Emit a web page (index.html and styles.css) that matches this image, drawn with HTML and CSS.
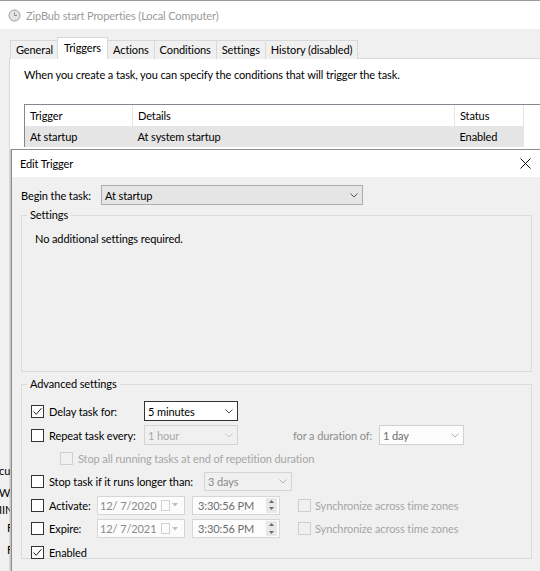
FILE: index.html
```html
<!DOCTYPE html>
<html lang="en">
<head>
    <meta charset="UTF-8">
    <title>ZipBub start Properties</title>
    <link rel="stylesheet" href="styles.css">
</head>
<body>

<div id="props" class="window">
    <div class="titlebar">
        <svg class="app-icon" width="13" height="13" viewBox="0 0 13 13">
            <circle cx="6.5" cy="6.5" r="5.5" fill="#e4e4e4" stroke="#9a9a9a"/>
            <path d="M6.5 3.5 V6.5 H9" fill="none" stroke="#8a8a8a"/>
        </svg>
        <span class="title">ZipBub start Properties (Local Computer)</span>
    </div>
    <div class="tabs">
        <div class="tab">General</div>
        <div class="tab active">Triggers</div>
        <div class="tab">Actions</div>
        <div class="tab">Conditions</div>
        <div class="tab">Settings</div>
        <div class="tab">History (disabled)</div>
    </div>
    <div class="tab-panel">
        <p class="intro">When you create a task, you can specify the conditions that will trigger the task.</p>
        <div class="listview">
            <table>
                <thead>
                    <tr><th class="c1">Trigger</th><th class="c2">Details</th><th class="c3">Status</th></tr>
                </thead>
                <tbody>
                    <tr class="sel"><td>At startup</td><td>At system startup</td><td>Enabled</td></tr>
                </tbody>
            </table>
        </div>
    </div>
</div>

<div class="peek">
    <div class="p1">cu</div>
    <div class="p2">Whe</div>
    <div class="p3">IIN</div>
    <div class="p4">F</div>
    <div class="p5">F</div>
</div>

<div id="editTrigger" class="dialog">
    <div class="dlg-title">
        <span>Edit Trigger</span>
        <svg class="close" width="11" height="11" viewBox="0 0 11 11">
            <path d="M0.5 0.5 L10.5 10.5 M10.5 0.5 L0.5 10.5" stroke="#111" stroke-width="1"/>
        </svg>
    </div>
    <div class="dlg-body">
        <div class="begin-row">
            <span class="begin-label">Begin the task:</span>
            <div class="combo combo-main">
                <span>At startup</span>
                <svg class="chev" width="8" height="5" viewBox="0 0 8 5"><path d="M0.5 0.5 L4 4 L7.5 0.5" fill="none" stroke="#555"/></svg>
            </div>
        </div>

        <fieldset class="group">
            <legend>Settings</legend>
            <div class="settings-body">No additional settings required.</div>
        </fieldset>

        <fieldset class="group advanced">
            <legend>Advanced settings</legend>
            <div class="adv-rows">
                <div class="row h24">
                    <span class="check on"><svg width="11" height="11" viewBox="0 0 11 11"><path d="M1.5 5.5 L4.2 8.3 L9.5 2.2" fill="none" stroke="#222"/></svg></span>
                    <span class="lbl w95">Delay task for:</span>
                    <div class="combo combo-focus w94">
                        <span>5 minutes</span>
                        <svg class="chev" width="8" height="5" viewBox="0 0 8 5"><path d="M0.5 0.5 L4 4 L7.5 0.5" fill="none" stroke="#555"/></svg>
                    </div>
                </div>
                <div class="row h24">
                    <span class="check"></span>
                    <span class="lbl w95">Repeat task every:</span>
                    <div class="combo combo-off w94">
                        <span>1 hour</span>
                        <svg class="chev" width="8" height="5" viewBox="0 0 8 5"><path d="M0.5 0.5 L4 4 L7.5 0.5" fill="none" stroke="#c4c4c4"/></svg>
                    </div>
                    <span class="lbl muted duration">for a duration of:</span>
                    <div class="combo combo-light w85">
                        <span>1 day</span>
                        <svg class="chev" width="8" height="5" viewBox="0 0 8 5"><path d="M0.5 0.5 L4 4 L7.5 0.5" fill="none" stroke="#b0b0b0"/></svg>
                    </div>
                </div>
                <div class="row h23 indent">
                    <span class="check off"></span>
                    <span class="lbl faint">Stop all running tasks at end of repetition duration</span>
                </div>
                <div class="row h23">
                    <span class="check"></span>
                    <span class="lbl w155">Stop task if it runs longer than:</span>
                    <div class="combo combo-off w88 short">
                        <span class="grey">3 days</span>
                        <svg class="chev" width="8" height="5" viewBox="0 0 8 5"><path d="M0.5 0.5 L4 4 L7.5 0.5" fill="none" stroke="#b0b0b0"/></svg>
                    </div>
                </div>
                <div class="row h24">
                    <span class="check"></span>
                    <span class="lbl w48">Activate:</span>
                    <div class="field date">
                        <span>12/&nbsp;7/2020</span>
                        <span class="cal-box"></span>
                        <svg class="tri" width="6" height="4" viewBox="0 0 6 4"><path d="M0 0 H6 L3 3.5 Z" fill="#c0c0c0"/></svg>
                    </div>
                    <div class="field time">
                        <span>3:30:56 PM</span>
                        <span class="spin">
                            <svg width="5" height="3" viewBox="0 0 5 3"><path d="M0 3 H5 L2.5 0 Z" fill="#6a6a6a"/></svg>
                            <svg width="5" height="3" viewBox="0 0 5 3"><path d="M0 0 H5 L2.5 3 Z" fill="#6a6a6a"/></svg>
                        </span>
                    </div>
                    <span class="check off sync"></span>
                    <span class="lbl faint">Synchronize across time zones</span>
                </div>
                <div class="row h23">
                    <span class="check"></span>
                    <span class="lbl w48">Expire:</span>
                    <div class="field date">
                        <span>12/&nbsp;7/2021</span>
                        <span class="cal-box"></span>
                        <svg class="tri" width="6" height="4" viewBox="0 0 6 4"><path d="M0 0 H6 L3 3.5 Z" fill="#c0c0c0"/></svg>
                    </div>
                    <div class="field time">
                        <span>3:30:56 PM</span>
                        <span class="spin">
                            <svg width="5" height="3" viewBox="0 0 5 3"><path d="M0 3 H5 L2.5 0 Z" fill="#6a6a6a"/></svg>
                            <svg width="5" height="3" viewBox="0 0 5 3"><path d="M0 0 H5 L2.5 3 Z" fill="#6a6a6a"/></svg>
                        </span>
                    </div>
                    <span class="check off sync"></span>
                    <span class="lbl faint">Synchronize across time zones</span>
                </div>
                <div class="row h24">
                    <span class="check on"><svg width="11" height="11" viewBox="0 0 11 11"><path d="M1.5 5.5 L4.2 8.3 L9.5 2.2" fill="none" stroke="#222"/></svg></span>
                    <span class="lbl">Enabled</span>
                </div>
            </div>
        </fieldset>
    </div>
</div>

</body>
</html>
```

FILE: styles.css
```css
body {
    margin: 0;
    width: 540px;
    height: 571px;
    overflow: hidden;
    position: relative;
    background: #f0f0f0;
    font-family: Lato, "Noto Sans", Arial, sans-serif;
    font-size: 11px;
    letter-spacing: -0.1px;
    color: #000;
}

/* background properties window */
.window {
    height: 571px;
    background: #f0f0f0;
    display: flex;
    flex-direction: column;
}
.titlebar {
    height: 28px;
    flex: none;
    background: #fff;
    border-top: 1px solid #9d9d9d;
    display: flex;
    align-items: center;
    padding-left: 8px;
}
.app-icon { margin-right: 5px; }
.title { color: #9a9a9a; }

.tabs {
    display: flex;
    align-items: flex-end;
    margin-top: 7px;
    padding-left: 10px;
    height: 22px;
    flex: none;
}
.tab {
    height: 18px;
    line-height: 18px;
    padding: 0 5px;
    border: 1px solid #d9d9d9;
    border-bottom: none;
    margin-right: -1px;
    background: #f0f0f0;
    position: relative;
    top: 1px;
    white-space: nowrap;
}
.tab.active {
    height: 21px;
    line-height: 20px;
    background: #fff;
    z-index: 2;
    margin: 0 -1px 0 -1px;
    padding: 0 6px;
}

.tab-panel {
    flex: 1;
    margin-left: 9px;
    background: #fff;
    border: 1px solid #d9d9d9;
    border-right: none;
    padding: 7px 0 0 14px;
}
.intro { margin: 0; line-height: 18px; white-space: nowrap; }

.listview {
    margin-top: 20px;
    border-top: 1px solid #828790;
    border-left: 1px solid #828790;
}
.listview table { border-collapse: collapse; width: 499px; }
.listview th, .listview td {
    text-align: left;
    font-weight: normal;
    height: 21px;
    padding: 0 0 0 5px;
    white-space: nowrap;
}
.listview th { border-right: 1px solid #e5e5e5; }
.listview .c1 { width: 102px; }
.listview .c2 { width: 316px; }
.listview tr.sel td { background: #e5e5e5; }
.listview tr td:last-child { border-right: 1px solid #e5e5e5; }

/* scraps of another window at the far left */
.peek {
    position: absolute;
    left: -1px;
    top: 463px;
    width: 12px;
    overflow: hidden;
    line-height: 16px;
    white-space: nowrap;
}
.peek .p2 { margin-top: 6px; }
.peek .p3 { margin-top: 1px; }
.peek .p4 { margin-top: 2px; padding-left: 8px; }
.peek .p5 { margin-top: 6px; padding-left: 8px; }

/* edit trigger dialog */
.dialog {
    position: absolute;
    left: 11px;
    top: 149px;
    width: 528px;
    height: 421px;
    border: 1px solid #8c8c8c;
    box-shadow: -1px 0 0 #c8c8c8;
    background: #f0f0f0;
}
.dlg-title {
    height: 27px;
    background: #fff;
    display: flex;
    align-items: center;
    padding-left: 8px;
}
.close { position: absolute; left: 508px; top: 8px; }

.dlg-body { padding: 8px 0 0 9px; }

.begin-row { display: flex; align-items: center; height: 20px; }
.begin-label { width: 80px; flex: none; white-space: nowrap; }

.combo {
    box-sizing: border-box;
    height: 20px;
    flex: none;
    display: flex;
    align-items: center;
    justify-content: space-between;
    padding: 0 4px 0 3px;
    border: 1px solid #adadad;
    white-space: nowrap;
}
.combo-main { width: 262px; background: #e5e5e5; }
.combo-focus { background: #fff; border-color: #333; }
.combo-off { background: #f0f0f0; border-color: #d4d4d4; color: #a8a8a8; }
.combo-light { background: #fcfcfc; border-color: #d0d0d0; color: #6d6d6d; }
.combo.short { height: 19px; }
.grey { color: #8a8a8a; }
.w94 { width: 94px; }
.w85 { width: 85px; }
.w88 { width: 88px; }

.group {
    width: 511px;
    box-sizing: border-box;
    margin: 2px 0 0 0;
    padding: 0;
    border: 1px solid #dcdcdc;
    min-inline-size: 0;
}
.group legend { margin-left: 5px; padding: 0 3px; line-height: 16px; }
.settings-body { height: 139px; padding: 9px 0 0 13px; }

.advanced { margin-top: 4px; height: 183px; }
.adv-rows { padding: 7px 0 0 9px; }

.row { display: flex; align-items: center; }
.h24 { height: 24px; }
.h23 { height: 23px; }
.row.indent { padding-left: 29px; }

.check {
    box-sizing: border-box;
    width: 13px;
    height: 13px;
    border: 1px solid #333;
    background: #fff;
    flex: none;
    margin-right: 5px;
    display: flex;
    align-items: center;
    justify-content: center;
}
.check.off { border-color: #cfcfcf; background: #f0f0f0; }
.check.sync { margin-left: 18px; margin-right: 4px; }

.lbl { white-space: nowrap; flex: none; }
.w95 { width: 95px; }
.w155 { width: 155px; }
.w48 { width: 48px; }
.faint { color: #a6a6a6; }
.muted { color: #8d8d8d; }
.duration { margin-left: 55px; width: 86px; }

.field {
    box-sizing: border-box;
    width: 88px;
    height: 19px;
    flex: none;
    border: 1px solid #d6d6d6;
    background: #fcfcfc;
    display: flex;
    align-items: center;
    padding-left: 2px;
    color: #8a8a8a;
    white-space: nowrap;
}
.field.time { margin-left: 7px; color: #6d6d6d; padding-left: 5px; }
.cal-box {
    width: 9px;
    height: 11px;
    box-sizing: border-box;
    border: 1px solid #d0d0d0;
    margin-left: auto;
}
.tri { margin: 0 6px 0 2px; }
.spin {
    margin-left: auto;
    margin-right: 2px;
    width: 11px;
    height: 15px;
    background: #e8e8e8;
    display: flex;
    flex-direction: column;
    align-items: center;
    justify-content: space-around;
}
```
